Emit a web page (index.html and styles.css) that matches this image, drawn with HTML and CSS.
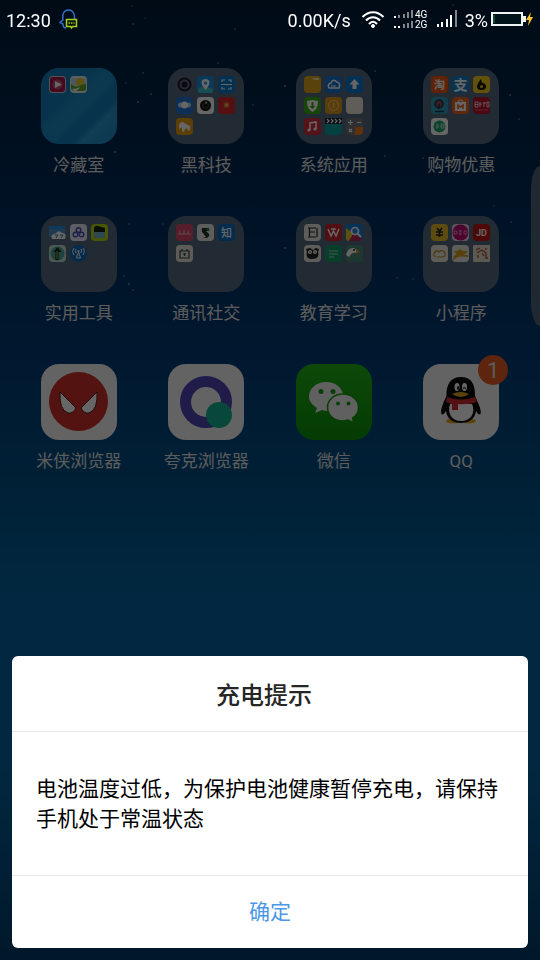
FILE: index.html
```html
<!DOCTYPE html>
<html lang="zh-CN">
<head>
    <meta charset="UTF-8">
    <meta name="viewport" content="width=device-width, initial-scale=1.0">
    <title>充电提示</title>
    <link rel="stylesheet" href="styles.css">
</head>
<body>
    <svg class="stars" viewBox="0 0 540 960" preserveAspectRatio="xMidYMin slice" aria-hidden="true">
        <g fill="#8494a5">
            <circle cx="132" cy="6" r="1" opacity=".5"/>
            <circle cx="133" cy="24" r="1" opacity=".6"/>
            <circle cx="235" cy="29" r="1" opacity=".6"/>
            <circle cx="145" cy="18" r="1" opacity=".3"/>
            <circle cx="453" cy="5" r="1" opacity=".5"/>
            <circle cx="143" cy="73" r="1" opacity=".6"/>
            <circle cx="126" cy="83" r="1" opacity=".4"/>
            <circle cx="138" cy="102" r="1" opacity=".8"/>
            <circle cx="151" cy="94" r="1" opacity=".7"/>
            <circle cx="115" cy="152" r="1"/>
            <circle cx="218" cy="63" r="1" opacity=".6"/>
            <circle cx="253" cy="105" r="1" opacity=".6"/>
            <circle cx="285" cy="86" r="1"/>
            <circle cx="375" cy="71" r="1" opacity=".6"/>
            <circle cx="510" cy="95" r="1" opacity=".8"/>
            <circle cx="519" cy="119" r="1" opacity=".5"/>
            <circle cx="385" cy="156" r="1" opacity=".6"/>
            <circle cx="423" cy="158" r="1" opacity=".6"/>
            <circle cx="511" cy="222" r="1" opacity=".6"/>
            <circle cx="129" cy="224" r="1" opacity=".5"/>
            <circle cx="163" cy="224" r="1" opacity=".4"/>
            <circle cx="285" cy="248" r="1" opacity=".9"/>
            <circle cx="124" cy="276" r="1" opacity=".5"/>
            <circle cx="129" cy="284" r="1" opacity=".8"/>
            <circle cx="133" cy="290" r="1" opacity=".6"/>
            <circle cx="397" cy="278" r="1" opacity=".5"/>
            <circle cx="413" cy="279" r="1" opacity=".5"/>
            <circle cx="494" cy="206" r="1" opacity=".3"/>
        </g>
    </svg>

    <header class="status">
        <span>12:30</span>
        <svg class="qq-note" width="20" height="22" viewBox="0 0 20 22" fill="none">
            <path d="M7 19C5 19 4 17 4 15L1 13.500L4 11C3 5 5 1 9.500 1S16 5 15.500 11" stroke="#2f6fc4" stroke-width="1.500"/>
            <path d="M7.500 10.500H17.500V17.500H13.500L12.500 19L11.500 17.500H7.500Z" stroke="#a5cf1c" stroke-width="1.500" fill="#07150c"/>
            <path d="M9.500 14H15.500" stroke="#a5cf1c" stroke-width="1.500" stroke-dasharray="1.500 1"/>
        </svg>
        <div class="status-right">
            <span class="speed">0.00K/s</span>
            <svg width="24" height="20" viewBox="0 0 24 20" fill="none" stroke="#fff" stroke-width="2">
                <path d="M1.500 7C7.500 .5 16.500 .5 22.500 7"/>
                <path d="M5 10.500C9 6 15 6 19 10.500"/>
                <path d="M8 14C10.500 11 13.500 11 16 14"/>
                <circle cx="12" cy="16" r="1.500" fill="#fff" stroke-width="1"/>
            </svg>
            <svg class="dual" width="36" height="24" viewBox="0 0 36 24" fill="#fff">
                <path d="M1 8h2v2H1zM1 18h2v2H1zM5 18h2v2H5z"/>
                <path d="M5 7h2v3H5zM10 6h2v4h-2zM14 4h2v6h-2zM18 2h2v8h-2zM10 16h2v4h-2zM14 15h2v5h-2zM18 13h2v7h-2z" opacity=".5"/>
                <text x="22" y="10">4G</text>
                <text x="22" y="20">2G</text>
            </svg>
            <svg width="20" height="20" viewBox="0 0 20 20" fill="#fff">
                <path d="M0 14h2v3H0zM4 12h2v5H4zM9 9h2v8H9zM13 5h2v12h-2z"/>
                <path d="M18 0h2v17h-2z" opacity=".5"/>
            </svg>
            <span>3%</span>
            <svg class="battery" width="43" height="20" viewBox="0 0 43 20">
                <rect x="1" y="3" width="30" height="12" fill="#00141a" stroke="#f0f5f3" stroke-width="2"/>
                <path d="M2.500 5h1v8h-1z" fill="#2a7a50"/>
                <path d="M32 6h3v6h-3z" fill="#f0f5f3"/>
                <path d="M40 2L35 10H38L37 16L42 7H39Z" fill="#ffc62b"/>
            </svg>
        </div>
    </header>

    <main class="launcher">
        <a class="app" href="#">
            <span class="tile folder fridge">
                <svg class="mini" viewBox="0 0 17 17"><rect width="17" height="17" rx="4" fill="#dcc9d2"/><rect x="1" y="1" width="15" height="15" rx="3" fill="#a81848"/><circle cx="8.500" cy="8.500" r="5" fill="#c44c70"/><path d="M6 5l7 3.500L6 12z" fill="#fff"/></svg>
                <svg class="mini" viewBox="0 0 17 17"><rect width="17" height="17" rx="4" fill="#e8f0e8"/><rect x="1" y="2" width="15" height="13" rx="3" fill="#b7dfe5"/><circle cx="10" cy="6" r="4" fill="#f0c72c"/><path d="M1 8q4 4 8 2t7-2v5q-1 2-3 2H5q-4 0-4-3z" fill="#60a52c"/><path d="M2 13q5 0 8-2-2 4-6 4z" fill="#fff"/></svg>
            </span>
            <span class="label">冷藏室</span>
        </a>

        <a class="app" href="#">
            <span class="tile folder">
                <svg class="mini" viewBox="0 0 17 17"><rect width="17" height="17" rx="4" fill="#606a80"/><circle cx="8.500" cy="8.500" r="6" fill="none" stroke="#171b24" stroke-width="2"/><circle cx="8.500" cy="8.500" r="3" fill="#171b24"/></svg>
                <svg class="mini" viewBox="0 0 17 17"><rect width="17" height="17" rx="4" fill="#168ede"/><path d="M1 12l7-2 8 3v2q0 2-3 2H4q-3 0-3-2z" fill="#43bfd1"/><path d="M8.500 14L5 9q-2-6 3.500-6T12 9z" fill="#fff"/><circle cx="8.500" cy="7" r="1.500" fill="#168ede"/></svg>
                <svg class="mini" viewBox="0 0 17 17"><rect width="17" height="17" rx="4" fill="#087bd0"/><path d="M4 6V4h3M10 4h3v2M4 11v2h3M10 13h3v-2M3 8.500h11" fill="none" stroke="#fff" stroke-width="1.200"/></svg>
                <svg class="mini" viewBox="0 0 17 17"><rect width="17" height="17" rx="4" fill="#2475d4"/><circle cx="4.500" cy="8" r="2.500" fill="#bad7f0"/><circle cx="12.500" cy="8" r="2.500" fill="#bad7f0"/><circle cx="8.500" cy="8" r="3.500" fill="#fff"/></svg>
                <svg class="mini" viewBox="0 0 17 17"><rect width="17" height="17" rx="4" fill="#fff"/><circle cx="8.500" cy="8.500" r="5.500" fill="#111"/><circle cx="8.500" cy="8.500" r="3.500" fill="#3d3430"/><circle cx="8.500" cy="8.500" r="2" fill="#111"/><circle cx="9" cy="5.500" r="1" fill="#ccc"/></svg>
                <svg class="mini" viewBox="0 0 17 17"><rect width="17" height="17" rx="4" fill="#d7292c"/><path d="M0 4l8.500 6L17 4" fill="none" stroke="#b51c22"/><circle cx="8.500" cy="8" r="3" fill="#e9643a"/><circle cx="8.500" cy="8" r="1.500" fill="#f7c744"/></svg>
                <svg class="mini" viewBox="0 0 17 17"><rect width="17" height="17" rx="4" fill="#e79c13"/><path d="M3 8q0-4 4-4l3 2 4 2v4l-2 1-1-3-2 1-1 3-2-1V9L3 11z" fill="#fff"/></svg>
            </span>
            <span class="label">黑科技</span>
        </a>

        <a class="app" href="#">
            <span class="tile folder">
                <svg class="mini" viewBox="0 0 17 17"><rect width="17" height="17" rx="4" fill="#dfa71c"/><path d="M8 2h7v2H10z" fill="#f9e6a6"/></svg>
                <svg class="mini" viewBox="0 0 17 17"><rect width="17" height="17" rx="4" fill="#1876d3"/><path d="M4 12q-2-4 2-5 2-5 6-1 4 1 2 6z" fill="none" stroke="#fff" stroke-width="1.500"/><path d="M6 10h5" stroke="#fff"/></svg>
                <svg class="mini" viewBox="0 0 17 17"><rect width="17" height="17" rx="4" fill="#087bd5"/><path d="M8.500 3l5 5.500h-3V13h-4V8.500h-3z" fill="#fff"/></svg>
                <svg class="mini" viewBox="0 0 17 17"><rect width="17" height="17" rx="4" fill="#3cad19"/><path d="M3 4l5.500-1L14 4q0 8-5.500 11Q3 12 3 4z" fill="#fff"/><path d="M7.500 5h2v4h2l-3 3-3-3h2z" fill="#3cad19"/></svg>
                <svg class="mini" viewBox="0 0 17 17"><rect width="17" height="17" rx="4" fill="#e0971b"/><circle cx="8.500" cy="8.500" r="5" fill="none" stroke="#f6ce83"/><path d="M8.500 6v5" stroke="#f6ce83" stroke-width="1.500"/></svg>
                <svg class="mini" viewBox="0 0 17 17"><rect width="17" height="17" rx="4" fill="#f1e9df"/></svg>
                <svg class="mini" viewBox="0 0 17 17"><rect width="17" height="17" rx="4" fill="#d62e40"/><path d="M6 12V5l6-1v7" fill="none" stroke="#fff" stroke-width="1.500"/><circle cx="5" cy="12" r="1.600" fill="#fff"/><circle cx="11" cy="11" r="1.600" fill="#fff"/></svg>
                <svg class="mini" viewBox="0 0 17 17"><rect width="17" height="17" rx="4" fill="#08a4a0"/><path d="M0 0h17v6H0z" fill="#17282c"/><path d="M2 1l2 2-2 2M6 1l2 2-2 2M10 1l2 2-2 2M14 1l2 2-2 2" stroke="#fff" stroke-width="1.300" fill="none"/></svg>
                <svg class="mini" viewBox="0 0 17 17"><rect width="17" height="17" rx="4" fill="#71777b"/><path d="M9 9h8v4q0 4-4 4H9z" fill="#ed7e21"/><path d="M2 4.500h5M4.500 2v5M11 4.500h4M3 11l3 3M6 11l-3 3" stroke="#fff" stroke-width="1.200"/></svg>
            </span>
            <span class="label">系统应用</span>
        </a>

        <a class="app" href="#">
            <span class="tile folder">
                <svg class="mini" viewBox="0 0 17 17"><rect width="17" height="17" rx="4" fill="#ea5710"/><text x="8.500" y="12.500" font-size="11" font-weight="700">淘</text></svg>
                <svg class="mini" viewBox="0 0 17 17"><rect width="17" height="17" rx="4" fill="#1281cd"/><text x="8.500" y="13.500" font-size="14" font-weight="700">支</text></svg>
                <svg class="mini" viewBox="0 0 17 17"><rect width="17" height="17" rx="4" fill="#f3ca18"/><path d="M8 3l1 4q4 0 4 3.500T8.500 14 4 10.500Q4 8 8 3z" fill="#15120a"/><circle cx="8.500" cy="10.500" r="1.500" fill="#f3ca18"/></svg>
                <svg class="mini" viewBox="0 0 17 17"><rect width="17" height="17" rx="4" fill="#2e9dba"/><circle cx="8" cy="7" r="4" fill="#96415d" stroke="#19384a" stroke-width="1.500"/><path d="M8 7v5M4 14.500h9" stroke="#183b4b" stroke-width="1.500"/></svg>
                <svg class="mini" viewBox="0 0 17 17"><rect width="17" height="17" rx="4" fill="#ed6120"/><path d="M3 5h11v9H3z" fill="#fff"/><path d="M6 5q0-2 2.500-2T11 5" fill="none" stroke="#fff"/><path d="M6 12V8l2.500 2L11 8v4" fill="none" stroke="#ed6120" stroke-width="1.500"/></svg>
                <svg class="mini" viewBox="0 0 17 17"><rect width="17" height="17" rx="4" fill="#bf1429"/><path d="M2 5h3v5H2zM2 7.500h3M7 5v5M6 7h3M11 5v5M10 6h3M14 5h2v5h-2z" fill="none" stroke="#fff" stroke-width=".8"/><path d="M2 13h13" stroke="#e87b82" stroke-width=".8"/></svg>
                <svg class="mini" viewBox="0 0 17 17"><rect width="17" height="17" rx="4" fill="#fff"/><circle cx="8.500" cy="8.500" r="6" fill="#1daa72"/><path d="M5 7h3M5 9h3M6 6v5M10 6h3v4h-3zM10 8h3" fill="none" stroke="#c9eddf" stroke-width=".8"/></svg>
            </span>
            <span class="label">购物优惠</span>
        </a>

        <a class="app" href="#">
            <span class="tile folder">
                <svg class="mini" viewBox="0 0 17 17"><path d="M0 2h16v3H0z" fill="#268fe0"/><path d="M0 5h16v8H0z" fill="#4c91cb"/><path d="M3 15q-2-5 3-5 4-5 7-1 5 0 3 6z" fill="#fff"/><path d="M6 11h3l-2 3M11 11h3l-2 3" stroke="#3278ad" fill="none"/></svg>
                <svg class="mini" viewBox="0 0 17 17"><rect width="17" height="17" rx="4" fill="#e8eafa"/><g fill="none" stroke="#4950b6" stroke-width="1.500"><circle cx="8.500" cy="6" r="2.300"/><circle cx="5.500" cy="10.500" r="2.300"/><circle cx="11.500" cy="10.500" r="2.300"/></g></svg>
                <svg class="mini" viewBox="0 0 17 17"><rect width="17" height="17" rx="4" fill="#b9d70b"/><path d="M3 4q1-3 4-2l7 2v4H3z" fill="#17210d"/><path d="M3 8h11v6H3z" fill="#74b3cf"/></svg>
                <svg class="mini" viewBox="0 0 17 17"><rect width="17" height="17" rx="4" fill="#c3ddcf"/><circle cx="8.500" cy="8.500" r="7" fill="#47a998"/><path d="M8.500 2l4 5h-3v8h-3V7h-2z" fill="#162218"/><path d="M8 6v8" stroke="#d8b634"/></svg>
                <svg class="mini" viewBox="0 0 17 17"><circle cx="8.500" cy="8.500" r="8.500" fill="#0b6abf"/><path d="M4 3q-3 3 0 7M6 4q-1 2 0 4M13 3q3 3 0 7M11 4q1 2 0 4M8.500 7l-2 6h4z" fill="none" stroke="#fff"/><circle cx="8.500" cy="6" r="1" fill="#fff"/></svg>
            </span>
            <span class="label">实用工具</span>
        </a>

        <a class="app" href="#">
            <span class="tile folder">
                <svg class="mini" viewBox="0 0 17 17"><rect width="17" height="17" rx="4" fill="#d44b6a"/><path d="M2 10h13M4 7v3M8 6v4M12 7v3" stroke="#f5b3c3" fill="none"/></svg>
                <svg class="mini" viewBox="0 0 17 17"><rect width="17" height="17" rx="4" fill="#ebebe6"/><path d="M5 4h7v3H9l3 3q1 3-3 4l-3-1h3l-3-4q-2-1-1-5z" fill="#27312f"/><circle cx="11" cy="5" r="1.500" fill="#4b8062"/></svg>
                <svg class="mini" viewBox="0 0 17 17"><rect width="17" height="17" rx="4" fill="#076ec4"/><text x="8.500" y="12.500" font-size="11" font-weight="500">知</text></svg>
                <svg class="mini" viewBox="0 0 17 17"><rect width="17" height="17" rx="4" fill="#e9e7de"/><path d="M4 6h9v7H4zM6 4v2M11 4v2M7 9h3M8.500 8v3" fill="none" stroke="#34443d" stroke-width="1.200"/></svg>
            </span>
            <span class="label">通讯社交</span>
        </a>

        <a class="app" href="#">
            <span class="tile folder">
                <svg class="mini" viewBox="0 0 17 17"><rect width="17" height="17" rx="4" fill="#e9e9e5"/><path d="M4 4h8M5 8h6M4 13h8M5.500 4v9M13 4v9" fill="none" stroke="#242b2d" stroke-width="1.200"/></svg>
                <svg class="mini" viewBox="0 0 17 17"><rect width="17" height="17" rx="4" fill="#cc2631"/><path d="M3 5l3 7 2.500-5 2.500 5 3-7M6 5h5" stroke="#fff" stroke-width="1.500" fill="none"/></svg>
                <svg class="mini" viewBox="0 0 17 17"><rect width="17" height="17" rx="4" fill="#117fd5"/><path d="M0 4l8 6-5 7q-3 0-3-3z" fill="#e7c72e"/><path d="M3 17l4-7 9 4q0 3-3 3z" fill="#bc2357"/><circle cx="9" cy="7" r="3.500" fill="#2589df" stroke="#fff" stroke-width="1.700"/><path d="M12 10l3 3" stroke="#fff" stroke-width="2"/></svg>
                <svg class="mini" viewBox="0 0 17 17"><rect width="17" height="17" rx="4" fill="#ebe9df"/><path d="M2 4l4-1 3 2 3-2 3 1-1 3q2 7-6 7-7 0-5-7z" fill="#202522"/><circle cx="6" cy="7" r="2" fill="#fff"/><circle cx="11" cy="7" r="2" fill="#fff"/><circle cx="6" cy="7" r=".7" fill="#222"/><circle cx="11" cy="7" r=".7" fill="#222"/></svg>
                <svg class="mini" viewBox="0 0 17 17"><rect width="17" height="17" rx="4" fill="#159d6c"/><path d="M4 6h9M4 9h9M4 12h5" stroke="#a5dfc9"/></svg>
                <svg class="mini" viewBox="0 0 17 17"><rect width="17" height="17" rx="4" fill="#4d8c78"/><path d="M0 10Q2 2 8 3l5 4-4 1q-3-1-6 4z" fill="#fff"/><path d="M10 4l4 3-4 1z" fill="#e79a26"/><circle cx="8" cy="5" r="1" fill="#222"/></svg>
            </span>
            <span class="label">教育学习</span>
        </a>

        <a class="app" href="#">
            <span class="tile folder">
                <svg class="mini" viewBox="0 0 17 17"><rect width="17" height="17" rx="4" fill="#e6bf2c"/><path d="M6 4l2.500 3L11 4M5 8h7M5 11h7M8.500 7v6" stroke="#292116" stroke-width="1.500" fill="none"/></svg>
                <svg class="mini" viewBox="0 0 17 17"><rect width="17" height="17" rx="4" fill="#e9d5e2"/><circle cx="8.500" cy="8.500" r="8" fill="#c00d79"/><path d="M2 7h3v3H2zM7 7h3M7 10h3M8 6v5M12 7h3v3h-3z" fill="none" stroke="#f0b4d3" stroke-width=".8"/></svg>
                <svg class="mini" viewBox="0 0 17 17"><rect width="17" height="17" rx="4" fill="#c51415"/><text x="8.500" y="11.500" font-size="9" font-weight="700">JD</text></svg>
                <svg class="mini" viewBox="0 0 17 17"><rect width="17" height="17" rx="4" fill="#ece8dc"/><path d="M5 12q-4-2-1-5 2-2 4 0 4-3 6 1 1 4-3 4H6" fill="none" stroke="#c2852f" stroke-width="1.200"/></svg>
                <svg class="mini" viewBox="0 0 17 17"><rect width="17" height="17" rx="4" fill="#e9e8df"/><path d="M1 6q4 1 7-2l3 2h5q-2 3-5 4h5v2q-6-1-10 0l-5 3q0-5 4-6z" fill="#d6a11c"/></svg>
                <svg class="mini" viewBox="0 0 17 17"><rect width="17" height="17" rx="1" fill="#e5ded0"/><path d="M3 5l4-2M4 8l5-3 4 3v4M5 10v3M9 8l2 3M12 13h3M13 3v2" fill="none" stroke="#ad493a" stroke-width="1.300"/></svg>
            </span>
            <span class="label">小程序</span>
        </a>

        <a class="app" href="#">
            <span class="tile">
                <svg class="logo" viewBox="0 0 76 76">
                    <circle cx="37.500" cy="37.500" r="29.500" fill="#d0302a"/>
                    <g fill="#fff" stroke="#461c1b" stroke-width="1">
                        <path d="M19 28L35 44Q32 50 27 49Q18 46 19 28Z"/>
                        <path d="M56 28L40 44Q43 50 48 49Q57 46 56 28Z"/>
                    </g>
                </svg>
            </span>
            <span class="label">米侠浏览器</span>
        </a>

        <a class="app" href="#">
            <span class="tile">
                <svg class="logo" viewBox="0 0 76 76">
                    <circle cx="38" cy="38" r="20.500" fill="none" stroke="#5047ba" stroke-width="11"/>
                    <circle cx="51" cy="51" r="13" fill="#16b493"/>
                </svg>
            </span>
            <span class="label">夸克浏览器</span>
        </a>

        <a class="app" href="#">
            <span class="tile wechat">
                <svg class="logo" viewBox="0 0 76 76">
                    <path d="M30 18C20 18 13 25 13 32.500C13 37 16 41 21 44L19 49L26 46C29 47 31 47 34 47C50 47 48 31 46 27C43 21 37 18 30 18Z" fill="#efefef"/>
                    <path d="M47 30C38 30 31.500 36 31.500 43.500S38 57 47 57L52 56L58 59L56.500 54C60 52 62.500 48 62.500 43.500C62.500 36 56 30 47 30Z" fill="#efefef" stroke="#1a9a10" stroke-width="1.500"/>
                    <g fill="#199b13"><circle cx="25" cy="27.500" r="2.500"/><circle cx="37" cy="27.500" r="2.500"/><circle cx="42" cy="39.500" r="2"/><circle cx="52.500" cy="39.500" r="2"/></g>
                </svg>
            </span>
            <span class="label">微信</span>
        </a>

        <a class="app" href="#">
            <span class="tile">
                <svg class="logo" viewBox="0 0 76 76">
                    <ellipse cx="30" cy="57" rx="7" ry="2.500" fill="#e6a71c"/>
                    <ellipse cx="46" cy="57" rx="7" ry="2.500" fill="#e6a71c"/>
                    <path d="M38 13C28 13 23 20 23.500 32C20 39 17 46 18.500 50Q20 52 23 47C24 55 30 59 38 59S52 55 53 47Q56 52 57.500 50C59 46 55 39 52 32C52.500 20 48 13 38 13Z" fill="#0a0a0a"/>
                    <path d="M27 40H49C53 50 47 57 38 57S24 50 27 40Z" fill="#fff"/>
                    <ellipse cx="34" cy="23" rx="2.500" ry="4" fill="#fff"/>
                    <ellipse cx="41.500" cy="23" rx="2.500" ry="4" fill="#fff"/>
                    <ellipse cx="35" cy="24" rx="1" ry="2" fill="#0a0a0a"/>
                    <path d="M40.500 25q1-4 2 0" fill="none" stroke="#0a0a0a"/>
                    <path d="M29 30Q38 26 46 30Q38 36 29 30Z" fill="#e6a71c"/>
                    <path d="M24 33Q38 38 52 33L54 38Q45 41 35 40V46H29V40L23 38Z" fill="#d4282c"/>
                </svg>
                <span class="badge">1</span>
            </span>
            <span class="label">QQ</span>
        </a>
    </main>

    <div class="side-handle"></div>

    <div class="overlay">
        <section class="dialog" role="alertdialog" aria-labelledby="dialog-title" aria-describedby="dialog-text">
            <h1 id="dialog-title">充电提示</h1>
            <p id="dialog-text">电池温度过低，为保护电池健康暂停充电，请保持手机处于常温状态</p>
            <button type="button" class="confirm">确定</button>
        </section>
    </div>
</body>
</html>
```
FILE: styles.css
```css
* {
    box-sizing: border-box;
}

body {
    margin: 0;
    min-height: 100vh;
    position: relative;
    overflow-x: hidden;
    font-family: Roboto, "Noto Sans CJK SC", sans-serif;
    color: white;
    background: linear-gradient(#001c38 0%, #002d5c 22%, #003e78 38%, #005086 50%, #0464a0 62%, #0464a0 80%, #023c6c 100%);
}

.stars {
    position: absolute;
    inset: 0;
    width: 100%;
    height: 100%;
}

/* status bar stays bright above the overlay */
.status {
    position: relative;
    z-index: 3;
    display: flex;
    align-items: center;
    gap: 8px;
    height: 40px;
    padding: 0 6px;
    font-size: 18px;
}

.status svg {
    flex: none;
}

.status-right {
    display: flex;
    align-items: center;
    gap: 8px;
    margin-left: auto;
}

.speed {
    margin-right: 2px;
}

.dual text {
    font-size: 10px;
}

.battery {
    margin-left: -5px;
}

/* home screen */
.launcher {
    position: relative;
    display: grid;
    grid-template-columns: repeat(4, 1fr);
    row-gap: 39px;
    padding: 28px 15px;
}

.app {
    display: flex;
    flex-direction: column;
    align-items: center;
    gap: 9px;
    color: #e6e6e6;
    text-decoration: none;
}

.tile {
    position: relative;
    width: 76px;
    height: 76px;
    border-radius: 18px;
    background: #f7f7f7;
}

.folder {
    display: grid;
    grid-template-columns: repeat(3, 17px);
    grid-auto-rows: 17px;
    align-content: start;
    gap: 4px;
    padding: 8px;
    background: #566a82;
}

.fridge {
    background: linear-gradient(135deg, #1680be 0%, #1680be 35%, #1d8cc6 45%, #1d8cc6 55%, #1680be 60%, #1680be 70%, #2898d0 75%, #1d8cc6 100%);
}

.wechat {
    background: linear-gradient(#22b516, #0a960a);
}

.mini,
.logo {
    display: block;
    width: 100%;
    height: 100%;
}

.mini text {
    fill: white;
    text-anchor: middle;
}

.label {
    font-size: 17px;
    line-height: 24px;
    white-space: nowrap;
}

.badge {
    position: absolute;
    top: -9px;
    right: -9px;
    width: 30px;
    height: 30px;
    border-radius: 50%;
    background: #e85a24;
    font-size: 22px;
    line-height: 32px;
    text-align: center;
}

.side-handle {
    position: absolute;
    top: 166px;
    right: 0;
    width: 9px;
    height: 160px;
    border-radius: 9px 0 0 9px / 24px 0 0 24px;
    background: #52687a;
}

/* dialog */
.overlay {
    position: fixed;
    inset: 0;
    z-index: 2;
    display: flex;
    align-items: flex-end;
    padding: 12px;
    background: rgba(0, 0, 0, 0.6);
}

.dialog {
    width: 100%;
    border-radius: 6px;
    background: white;
    color: black;
}

.dialog h1 {
    margin: 0;
    padding: 22px 12px 17px 0;
    border-bottom: 1px solid #e8e8e8;
    font-size: 24px;
    font-weight: 500;
    line-height: 36px;
    text-align: center;
    color: #262626;
}

.dialog p {
    margin: 0;
    padding: 42px 24px 41px;
    font-size: 21px;
    line-height: 30px;
}

.confirm {
    display: block;
    width: 100%;
    height: 73px;
    padding: 0 0 4px;
    border: none;
    border-top: 1px solid #e8e8e8;
    background: none;
    font-family: inherit;
    font-size: 21px;
    color: #4a98e6;
    cursor: pointer;
}
```
